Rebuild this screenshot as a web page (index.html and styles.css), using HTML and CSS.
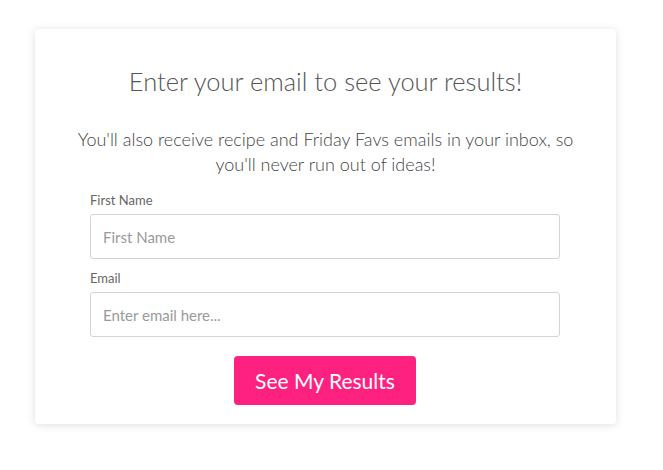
FILE: index.html
```html
<!DOCTYPE html>
<html lang="en">
<head>
    <meta charset="UTF-8" />
    <title>See your results</title>
    <link rel="stylesheet" href="styles.css">
</head>
<body>

<div class="quiz-card">
    <h2 class="quiz-title">Enter your email to see your results!</h2>
    <p class="quiz-text">You'll also receive recipe and Friday Favs emails in your inbox, so you'll never run out of ideas!</p>

    <form class="quiz-form">
        <label class="field-label" for="first-name">First Name</label>
        <input class="field-input" id="first-name" type="text" placeholder="First Name">

        <label class="field-label" for="email">Email</label>
        <input class="field-input" id="email" type="email" placeholder="Enter email here...">

        <div class="form-actions">
            <button class="submit-btn" type="button">See My Results</button>
        </div>
    </form>
</div>

</body>
</html>
```

FILE: styles.css
```css
body {
    font-family: Lato, "Open Sans", sans-serif;
    margin: 0;
    padding: 29px 47px 20px 35px;
    background: #fff;
}

.quiz-card {
    width: 581px;
    height: 395px;
    box-sizing: border-box;
    background: #fff;
    border-radius: 4px;
    box-shadow: 0 1px 8px rgba(0, 0, 0, 0.13);
    padding: 34px 40px 0;
}

.quiz-title {
    margin: 0;
    font-size: 25.5px;
    font-weight: 300;
    color: #555;
    text-align: center;
    line-height: 36px;
}

.quiz-text {
    margin: 28px 0 0;
    font-size: 18px;
    font-weight: 300;
    color: #444;
    text-align: center;
    line-height: 25px;
}

.quiz-form {
    display: flex;
    flex-direction: column;
    margin: 15px 16px 0 15px;
}

.field-label {
    font-size: 13px;
    color: #666;
    line-height: 16px;
    margin-bottom: 6px;
}

.field-input {
    height: 45px;
    box-sizing: border-box;
    border: 1px solid #d4d4d4;
    border-radius: 3px;
    padding: 0 12px;
    font-family: inherit;
    font-size: 15px;
    color: #555;
    margin-bottom: 11px;
}

.field-input::placeholder {
    color: #9a9a9a;
}

.form-actions {
    display: flex;
    justify-content: center;
    margin-top: 8px;
}

.submit-btn {
    width: 182px;
    height: 49px;
    border: none;
    border-radius: 4px;
    background: #ff2180;
    color: #fff;
    font-family: inherit;
    font-size: 21px;
}
```
